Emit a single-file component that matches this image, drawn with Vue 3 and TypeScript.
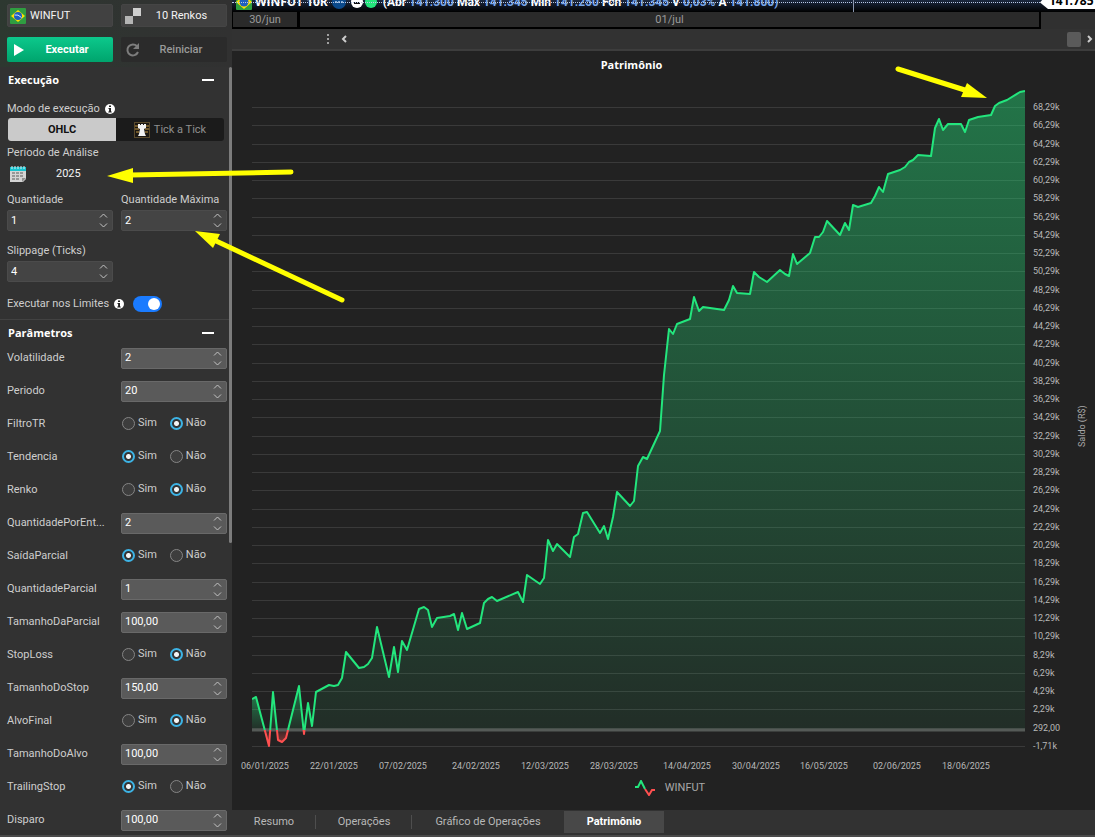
<script setup lang="ts">
import { reactive, ref } from 'vue'

type Point = [number, number]
interface Param {
  id: string
  label: string
  kind: 'number' | 'choice'
  value: string
}

const asset = ref('WINFUT')
const mode = ref('ohlc')
const quantity = ref('1')
const maxQuantity = ref('2')
const slippage = ref('4')
const runAtLimits = ref(true)

const params = reactive<Param[]>([
  { id: 'volatilidade', label: 'Volatilidade', kind: 'number', value: '2' },
  { id: 'periodo', label: 'Periodo', kind: 'number', value: '20' },
  { id: 'filtro', label: 'FiltroTR', kind: 'choice', value: 'nao' },
  { id: 'tendencia', label: 'Tendencia', kind: 'choice', value: 'sim' },
  { id: 'renko', label: 'Renko', kind: 'choice', value: 'nao' },
  { id: 'qtd-entrada', label: 'QuantidadePorEnt...', kind: 'number', value: '2' },
  { id: 'saida-parcial', label: 'SaídaParcial', kind: 'choice', value: 'sim' },
  { id: 'qtd-parcial', label: 'QuantidadeParcial', kind: 'number', value: '1' },
  { id: 'tam-parcial', label: 'TamanhoDaParcial', kind: 'number', value: '100,00' },
  { id: 'stop-loss', label: 'StopLoss', kind: 'choice', value: 'nao' },
  { id: 'tam-stop', label: 'TamanhoDoStop', kind: 'number', value: '150,00' },
  { id: 'alvo-final', label: 'AlvoFinal', kind: 'choice', value: 'nao' },
  { id: 'tam-alvo', label: 'TamanhoDoAlvo', kind: 'number', value: '100,00' },
  { id: 'trailing', label: 'TrailingStop', kind: 'choice', value: 'sim' },
  { id: 'disparo', label: 'Disparo', kind: 'number', value: '100,00' },
])

const quote: [string, string][] = [
  ['(Abr', '141.300'],
  ['Max', '141.345'],
  ['Min', '141.250'],
  ['Fch', '141.345'],
  ['V', '0,03%'],
  ['A', '141.800)'],
]

const tabs = ['Resumo', 'Operações', 'Gráfico de Operações', 'Patrimônio']
const activeTab = ref('Patrimônio')

const dates = [
  '06/01/2025', '22/01/2025', '07/02/2025', '24/02/2025', '12/03/2025', '28/03/2025',
  '14/04/2025', '30/04/2025', '16/05/2025', '02/06/2025', '18/06/2025',
]

const yLabels: string[] = []
for (let v = 68; v >= 2; v -= 2) yLabels.push(v + ',29k')
yLabels.push('292,00', '-1,71k')

const gridLines = yLabels.map((_, i) => Math.round(107 + (i * 639) / 35) + 0.5)

const baseline = 730
const equity: Point[] = [
  [252, 699], [256, 697], [269, 746], [273, 692], [278, 740], [282, 742], [286, 738], [299, 686],
  [304, 734], [308, 703], [312, 726], [316, 692], [329, 685], [334, 686], [338, 685], [342, 678],
  [346, 652], [359, 668], [364, 667], [368, 664], [372, 658], [377, 627], [389, 677], [394, 647],
  [398, 672], [402, 641], [407, 650], [419, 609], [424, 607], [428, 610], [432, 627], [437, 618],
  [450, 616], [454, 614], [458, 630], [462, 613], [467, 629], [480, 623], [484, 603], [488, 599],
  [492, 597], [497, 601], [518, 592], [523, 602], [527, 575], [540, 584], [544, 578], [548, 540],
  [553, 551], [557, 544], [570, 557], [574, 537], [578, 534], [583, 513], [587, 512], [600, 533],
  [604, 526], [608, 539], [613, 517], [617, 492], [630, 506], [634, 501], [638, 466], [643, 457],
  [647, 459], [660, 431], [664, 375], [669, 329], [673, 334], [677, 324], [690, 319], [694, 297],
  [699, 311], [703, 307], [724, 310], [729, 300], [733, 286], [737, 293], [750, 294], [754, 272],
  [759, 277], [767, 282], [780, 270], [785, 274], [789, 276], [793, 254], [797, 264], [810, 253],
  [815, 237], [819, 237], [823, 232], [827, 221], [840, 235], [845, 223], [849, 230], [853, 205],
  [858, 207], [871, 203], [875, 196], [879, 187], [883, 192], [888, 174], [900, 170], [905, 167],
  [909, 162], [913, 160], [918, 155], [931, 156], [935, 128], [939, 119], [943, 130], [948, 124],
  [961, 124], [965, 132], [969, 120], [978, 117], [991, 115], [995, 106], [999, 103], [1007, 100],
  [1020, 92], [1025, 91],
]

interface Run {
  gain: boolean
  line: string
  area: string
}

/* Cuts the curve where it crosses zero, so gains and losses are painted apart. */
function splitRuns(points: Point[]): Run[] {
  const runs: Run[] = []
  let current: Point[] = [points[0]]
  const close = () => {
    const line = current.map((p) => p.join(',')).join(' ')
    const first = current[0][0]
    const last = current[current.length - 1][0]
    runs.push({
      gain: current.some((p) => p[1] < baseline),
      line,
      area: `${first},${baseline} ${line} ${last},${baseline}`,
    })
  }
  for (let i = 1; i < points.length; i++) {
    const [x0, y0] = points[i - 1]
    const [x1, y1] = points[i]
    if (y0 < baseline !== y1 < baseline) {
      const cross: Point = [x0 + ((baseline - y0) * (x1 - x0)) / (y1 - y0), baseline]
      current.push(cross)
      close()
      current = [cross]
    }
    current.push([x1, y1])
  }
  close()
  return runs
}

const runs = splitRuns(equity)
</script>

<template>
  <div class="shell">
    <div class="work">
      <aside class="sidebar">
        <div class="toolbar">
          <button class="pick asset" type="button">
            <svg class="flag" viewBox="0 0 16 16" aria-hidden="true">
              <rect width="16" height="16" rx="1" fill="#2f9e41" />
              <path d="M8 2 15 8 8 14 1 8z" fill="#ffe000" />
              <circle cx="8" cy="8" r="4" fill="#1f5fc0" />
              <path d="M4.5 7Q8 6 11.500 9.500" fill="none" stroke="#cfe3ff" stroke-width="1" />
            </svg>
            <span>{{ asset }}</span>
          </button>
          <button class="pick" type="button">
            <svg class="renko" viewBox="0 0 16 16" aria-hidden="true">
              <rect x="8" width="8" height="8" fill="#cfcfcf" />
              <rect y="8" width="8" height="8" fill="#b4b4b4" />
            </svg>
            <span class="mid">10 Renkos</span>
          </button>
          <button class="run" type="button">
            <svg class="play" viewBox="0 0 12 14" aria-hidden="true"><path d="M1 1 11 7 1 13z" fill="#fff" /></svg>
            <span class="mid">Executar</span>
          </button>
          <button class="reset" type="button">
            <svg class="reload" viewBox="0 0 16 16" aria-hidden="true">
              <path d="M12 4.200A5.500 5.500 0 1 0 13 10" fill="none" stroke="#7d7d7d" stroke-width="2" />
              <path d="M14 1v6H8z" fill="#7d7d7d" />
            </svg>
            <span class="mid">Reiniciar</span>
          </button>
        </div>

        <div class="scroller">
          <section class="group">
            <h2 class="heading">
              Execução
              <button class="collapse" type="button" aria-label="Recolher Execução"></button>
            </h2>
            <div class="caption first">
              Modo de execução
              <svg class="info" viewBox="0 0 10 10" aria-hidden="true">
                <circle cx="5" cy="5" r="5" fill="#fff" />
                <path d="M4 1.500h2v1.500h-2zM3.500 4h2.500v3.500h.7v1H3.300v-1h.8v-2.500h-.6z" fill="#222" />
              </svg>
            </div>
            <div class="segments">
              <button type="button" :class="{ on: mode === 'ohlc' }" @click="mode = 'ohlc'">OHLC</button>
              <button type="button" :class="{ on: mode === 'tick' }" @click="mode = 'tick'">
                <svg class="rook" viewBox="0 0 16 16" aria-hidden="true">
                  <rect x=".5" y=".5" width="15" height="15" fill="#1b1712" stroke="#5a4a2c" />
                  <path d="M1 4h5M1 7h4M2 10h3M10 4h5M11 7h4M11 10h3" stroke="#c79a45" stroke-width="1" />
                  <path d="M4 2h2v1h1v-1h2v1h1v-1h2v4l-2 1 1 5 1 2H4l1-2 1-5-2-1z" fill="#f2f2f2" />
                </svg>
                Tick a Tick
              </button>
            </div>
            <div class="caption period">Período de Análise</div>
            <button class="calendar-row" type="button">
              <svg class="calendar" viewBox="0 0 16 16" aria-hidden="true">
                <path d="M0 4h16v9l-3 3H0z" fill="#d4d4d4" />
                <path d="M16 12h-4v4z" fill="#8f8f8f" />
                <rect y="1" width="16" height="4" fill="#17c3cf" />
                <path d="M2 0v3M5 0v3M8 0v3M11 0v3M14 0v3" stroke="#d8f4f6" />
                <path d="M2 6h3v2H2zM6 6h3v2H6zM10 6h3v2h-3zM2 9h3v2H2zM6 9h3v2H6zM10 9h3v2h-3zM2 12h3v2H2zM6 12h3v2H6z" fill="#979797" />
              </svg>
              <span>2025</span>
            </button>

            <div class="pair">
              <div>
                <label class="caption" for="quantity">Quantidade</label>
                <div class="spin">
                  <input id="quantity" v-model="quantity" type="text" />
                  <span class="steps">
                    <button type="button" aria-label="Aumentar"><svg viewBox="0 0 9 5"><path d="M1 4.500 4.500 1 8 4.500" /></svg></button>
                    <button type="button" aria-label="Diminuir"><svg viewBox="0 0 9 5"><path d="M1 .5 4.500 4 8 .5" /></svg></button>
                  </span>
                </div>
              </div>
              <div>
                <label class="caption" for="max-quantity">Quantidade Máxima</label>
                <div class="spin">
                  <input id="max-quantity" v-model="maxQuantity" type="text" />
                  <span class="steps">
                    <button type="button" aria-label="Aumentar"><svg viewBox="0 0 9 5"><path d="M1 4.500 4.500 1 8 4.500" /></svg></button>
                    <button type="button" aria-label="Diminuir"><svg viewBox="0 0 9 5"><path d="M1 .5 4.500 4 8 .5" /></svg></button>
                  </span>
                </div>
              </div>
              <div>
                <label class="caption" for="slippage">Slippage (Ticks)</label>
                <div class="spin">
                  <input id="slippage" v-model="slippage" type="text" />
                  <span class="steps">
                    <button type="button" aria-label="Aumentar"><svg viewBox="0 0 9 5"><path d="M1 4.500 4.500 1 8 4.500" /></svg></button>
                    <button type="button" aria-label="Diminuir"><svg viewBox="0 0 9 5"><path d="M1 .5 4.500 4 8 .5" /></svg></button>
                  </span>
                </div>
              </div>
            </div>

            <label class="limits">
              Executar nos Limites
              <svg class="info" viewBox="0 0 10 10" aria-hidden="true">
                <circle cx="5" cy="5" r="5" fill="#fff" />
                <path d="M4 1.500h2v1.500h-2zM3.500 4h2.500v3.500h.7v1H3.300v-1h.8v-2.500h-.6z" fill="#222" />
              </svg>
              <input v-model="runAtLimits" class="switch" type="checkbox" role="switch" />
            </label>
          </section>

          <section class="group params">
            <h2 class="heading">
              Parâmetros
              <button class="collapse" type="button" aria-label="Recolher Parâmetros"></button>
            </h2>
            <div class="rows">
              <div v-for="p in params" :key="p.id" class="row">
                <label v-if="p.kind === 'number'" class="name" :for="p.id">{{ p.label }}</label>
                <span v-else :id="p.id" class="name">{{ p.label }}</span>
                <div v-if="p.kind === 'number'" class="spin light">
                  <input :id="p.id" v-model="p.value" type="text" />
                  <span class="steps">
                    <button type="button" aria-label="Aumentar"><svg viewBox="0 0 9 5"><path d="M1 4.500 4.500 1 8 4.500" /></svg></button>
                    <button type="button" aria-label="Diminuir"><svg viewBox="0 0 9 5"><path d="M1 .5 4.500 4 8 .5" /></svg></button>
                  </span>
                </div>
                <div v-else class="choice" role="radiogroup" :aria-labelledby="p.id">
                  <label><input v-model="p.value" type="radio" :name="p.id" value="sim" />Sim</label>
                  <label><input v-model="p.value" type="radio" :name="p.id" value="nao" />Não</label>
                </div>
              </div>
            </div>
          </section>
          <div class="scroll-track"><div class="scroll-thumb"></div></div>
        </div>
      </aside>

      <main class="main">
        <div class="ticker">
          <div class="quote">
            <svg class="ticker-flag" viewBox="0 0 16 16" aria-hidden="true">
              <rect width="16" height="16" rx="1" fill="#2f9e41" />
              <path d="M8 1 16 8 8 15 0 8z" fill="#ffe000" />
              <circle cx="8" cy="8" r="4.500" fill="#1f5fc0" />
            </svg>
            <b class="symbol">WINFUT 10R</b>
            <svg class="badges" viewBox="0 0 46 14" aria-hidden="true">
              <circle cx="7" cy="7" r="7" fill="#0b4a8c" />
              <path d="M3 7h8" stroke="#7fa9d4" stroke-width="2" stroke-dasharray="2 1" />
              <circle cx="25" cy="7" r="6" fill="#fff" />
              <path d="M22 8h6" stroke="#111" stroke-width="2" />
              <circle cx="39" cy="7" r="6" fill="#23e67d" />
            </svg>
            <span class="values">
              <template v-for="[k, v] in quote" :key="k"><b>{{ k }}</b>&nbsp;<i>{{ v }}</i>&nbsp;</template>
            </span>
          </div>
          <div class="level"></div>
          <div class="marker"></div>
          <div class="price">141.785</div>
        </div>
        <div class="day-axis">
          <span class="day">30/jun</span>
          <span class="day wide">01/jul</span>
        </div>
        <div class="h-scroll">
          <span class="grip"><i></i><i></i><i></i></span>
          <button type="button" class="arrow" aria-label="Anterior"><svg viewBox="0 0 6 8"><path d="M5 1 2 4 5 7" /></svg></button>
          <span class="thumb"></span>
          <button type="button" class="arrow next" aria-label="Próximo"><svg viewBox="0 0 6 8"><path d="M1 1 4 4 1 7" /></svg></button>
        </div>

        <section class="chart">
          <h1 class="chart-title">Patrimônio</h1>
          <div class="plot-area">
            <div class="plot">
              <svg class="plot-svg" viewBox="252 88 773 664" preserveAspectRatio="none" role="img" aria-label="Patrimônio">
                <defs>
                  <linearGradient id="gain" x1="0" y1="0" x2="0" y2="1">
                    <stop offset="0" stop-color="#23e67d" stop-opacity=".42" />
                    <stop offset="1" stop-color="#23e67d" stop-opacity=".06" />
                  </linearGradient>
                  <linearGradient id="loss" x1="0" y1="1" x2="0" y2="0">
                    <stop offset="0" stop-color="#ff5050" stop-opacity=".42" />
                    <stop offset="1" stop-color="#ff5050" stop-opacity=".1" />
                  </linearGradient>
                </defs>
                <line v-for="y in gridLines" :key="y" class="grid-line" x1="252" x2="1025" :y1="y" :y2="y" />
                <polygon
                  v-for="(r, i) in runs"
                  :key="'a' + i"
                  :points="r.area"
                  :fill="r.gain ? 'url(#gain)' : 'url(#loss)'"
                />
                <line class="zero" x1="252" x2="1025" :y1="baseline" :y2="baseline" />
                <polyline
                  v-for="(r, i) in runs"
                  :key="'l' + i"
                  :class="['curve', r.gain ? 'gain' : 'loss']"
                  :points="r.line"
                />
              </svg>
            </div>
            <div class="y-axis"><span v-for="y in yLabels" :key="y">{{ y }}</span></div>
            <div class="y-title">Saldo (R$)</div>
          </div>
          <div class="x-axis"><span v-for="d in dates" :key="d">{{ d }}</span></div>
          <div class="legend">
            <svg class="legend-mark" viewBox="0 0 20 16" aria-hidden="true">
              <path d="M0 7h3L6 1 10 9" fill="none" stroke="#23e67d" stroke-width="2" />
              <path d="M10 9 14 15 17 10h3" fill="none" stroke="#ff5050" stroke-width="2" />
            </svg>
            WINFUT
          </div>
        </section>

        <nav class="tabs">
          <button
            v-for="t in tabs"
            :key="t"
            type="button"
            :class="{ active: t === activeTab }"
            @click="activeTab = t"
          >{{ t }}</button>
        </nav>
      </main>
    </div>
    <div class="bottom-edge"></div>

    <svg class="notes" width="1095" height="837" aria-hidden="true">
      <g stroke="#ffff00" stroke-width="5" stroke-linecap="round">
        <path d="M291 172 130 175M342 300 214 240M898 69 968 91" />
      </g>
      <g fill="#ffff00">
        <path d="M107 176 133 168 133 183z" />
        <path d="M195 231 220 234 213 248z" />
        <path d="M987 98 967 83 961 97z" />
      </g>
    </svg>
  </div>
</template>

<style>
body {
  margin: 0;
  background: #222;
}
</style>

<style scoped>
.shell {
  position: relative;
  display: flex;
  flex-direction: column;
  min-height: 100vh;
  overflow: hidden;
  background: #222;
  color: #cecece;
  font: 11px/16px Roboto, "Noto Sans", sans-serif;
}
.shell * {
  box-sizing: border-box;
}
button,
input {
  margin: 0;
  padding: 0;
  border: 0;
  background: none;
  color: inherit;
  font: inherit;
}
svg {
  display: block;
  flex: none;
}
.work {
  flex: 1;
  display: grid;
  grid-template-columns: 232px minmax(0, 1fr);
}

.sidebar {
  display: flex;
  flex-direction: column;
  background: #323232;
}
.toolbar {
  display: grid;
  grid-template-columns: 106px 106px;
  grid-template-rows: 23px 25px;
  column-gap: 8px;
  row-gap: 10px;
  height: 67px;
  padding: 4px 7px 0;
  background: linear-gradient(90deg, #2d3830, #303331 60%, #313131);
}
.toolbar button {
  display: flex;
  align-items: center;
  border-radius: 2px;
}
.mid {
  flex: 1;
  text-align: center;
}
.pick {
  padding: 0 4px 0 3px;
  border: 1px solid #454545;
  background: #414141;
  color: #f4f4f4;
}
.pick.asset {
  gap: 4px;
  padding-left: 2px;
}
.flag,
.renko,
.reload,
.rook {
  width: 16px;
  height: 16px;
}
.run {
  padding: 0 4px 0 6px;
  background: linear-gradient(#0cc98c, #00a46d);
  color: #fff;
  font-weight: 700;
}
.play {
  width: 12px;
  height: 14px;
}
.reset {
  padding: 0 6px 0 4px;
  background: #2b2b2b;
  color: #9a9a9a;
  font-weight: 500;
}

.scroller {
  position: relative;
  flex: 1;
}
.scroll-track {
  position: absolute;
  top: 0;
  right: 0;
  bottom: 0;
  width: 3px;
}
.scroll-thumb {
  height: 62%;
  border-radius: 2px;
  background: #7c7c7c;
}
.group {
  padding: 0 5px 0 7px;
}
.heading {
  display: flex;
  align-items: center;
  justify-content: space-between;
  height: 26px;
  margin: 0;
  padding: 0 13px 0 1px;
  color: #fff;
  font-family: "Open Sans", sans-serif;
  font-size: 11px;
  font-weight: 700;
}
.collapse {
  width: 12px;
  height: 2px;
  background: #fff;
}
.caption {
  display: flex;
  align-items: center;
  gap: 5px;
  height: 16px;
  white-space: nowrap;
}
.caption.first {
  margin: 8px 0 1px;
}
.caption.period {
  margin: 4px 0 3px;
}
.info {
  width: 10px;
  height: 10px;
}
.segments {
  display: grid;
  grid-template-columns: 1fr 1fr;
  height: 23px;
  margin: 0 3px 0 1px;
  border-radius: 3px;
  background: #1b1b1b;
  overflow: hidden;
}
.segments button {
  display: flex;
  align-items: center;
  justify-content: center;
  gap: 4px;
  color: #8f8f8f;
}
.segments .on {
  background: #cacaca;
  color: #111;
  font-weight: 700;
}
.calendar-row {
  display: flex;
  align-items: center;
  gap: 30px;
  height: 20px;
  padding-left: 3px;
  color: #f4f4f4;
}
.calendar {
  width: 16px;
  height: 16px;
}
.pair {
  display: grid;
  grid-template-columns: 106px 106px;
  column-gap: 8px;
  row-gap: 12px;
  margin-top: 8px;
}
.pair .spin {
  margin-top: 2px;
}
.spin {
  display: flex;
  height: 21px;
  border: 1px solid #4b4b4b;
  border-radius: 2px;
  background: #444;
  color: #fff;
}
.spin input {
  flex: 1;
  min-width: 0;
  padding-left: 3px;
  outline: none;
}
.spin.light {
  border-color: #696969;
  background: #5a5a5a;
}
.steps {
  display: flex;
  flex-direction: column;
  justify-content: space-between;
  width: 16px;
  padding: 2px 3px 2px 3px;
}
.steps button {
  height: 5px;
}
.steps svg {
  width: 9px;
  height: 5px;
  fill: none;
  stroke: #c4c4c4;
}
.limits {
  display: flex;
  align-items: center;
  gap: 5px;
  height: 16px;
  margin-top: 14px;
}
.switch {
  appearance: none;
  width: 29px;
  height: 16px;
  margin-left: 4px;
  padding: 2px;
  border-radius: 8px;
  background: #555;
}
.switch::before {
  content: "";
  display: block;
  width: 12px;
  height: 12px;
  border-radius: 50%;
  background: #fff;
}
.switch:checked {
  padding-left: 15px;
  background: #1a7bff;
}
.params {
  margin-top: 7px;
  border-top: 1px solid #424242;
}
.rows {
  display: flex;
  flex-direction: column;
  gap: 11px;
  padding: 1px 0 4px;
}
.row {
  display: grid;
  grid-template-columns: 106px 106px;
  column-gap: 8px;
  align-items: center;
  height: 22px;
}
.name {
  white-space: nowrap;
}
.choice {
  display: flex;
  gap: 13px;
  padding: 0 0 2px 1px;
}
.choice label {
  display: flex;
  align-items: center;
  gap: 3px;
  min-width: 34px;
}
.choice input {
  appearance: none;
  width: 13px;
  height: 13px;
  border: 1px solid #858585;
  border-radius: 50%;
  background: #3d3d3d;
}
.choice input:checked {
  border: 2px solid #3db4e6;
  background: radial-gradient(circle, #f4f4f4 2px, #333 3px);
}

.main {
  display: flex;
  flex-direction: column;
  min-width: 0;
}
.ticker {
  position: relative;
  height: 12px;
  overflow: hidden;
  background: linear-gradient(#1c2940, #000);
}
.quote {
  display: flex;
  align-items: center;
  height: 16px;
  margin-top: -6px;
  padding-left: 4px;
  color: #fff;
  font-family: "Open Sans", sans-serif;
  font-size: 12px;
  white-space: nowrap;
}
.ticker-flag {
  width: 16px;
  height: 16px;
}
.symbol {
  margin: 0 4px 0 3px;
}
.badges {
  width: 46px;
  height: 14px;
  margin-right: 5px;
}
.values {
  font-family: Roboto, sans-serif;
  font-size: 12px;
}
.values b {
  font-weight: 700;
}
.values i {
  color: #78a6ea;
  font-style: normal;
  font-weight: 700;
}
.level {
  position: absolute;
  top: 2px;
  right: 55px;
  left: 0;
  border-top: 1px dotted #b8c8e8;
}
.marker {
  position: absolute;
  top: 0;
  left: 72%;
  width: 1px;
  height: 12px;
  background: #8a96ae;
}
.price {
  position: absolute;
  top: -7px;
  right: 0;
  width: 55px;
  height: 16px;
  padding-left: 9px;
  background: #fff;
  clip-path: polygon(8px 100%, 0 60%, 8px 0, 100% 0, 100% 100%);
  color: #000;
  font-family: "Open Sans", sans-serif;
  font-size: 12px;
  font-weight: 700;
}
.day-axis {
  display: flex;
  gap: 3px;
  height: 17px;
  margin-right: 54px;
  padding: 0 2px 2px 1px;
  background: #000;
  box-shadow: 54px 0 #303030;
  color: #9a9a9a;
}
.day {
  width: 64px;
  background: #2a2a2a;
  line-height: 15px;
  text-align: center;
}
.day.wide {
  flex: 1;
  width: auto;
}
.h-scroll {
  display: flex;
  align-items: center;
  height: 22px;
  padding: 0 2px 0 95px;
  border-bottom: 2px solid #3d3d3d;
  background: #323232;
}
.grip {
  display: flex;
  flex-direction: column;
  gap: 2px;
  width: 14px;
}
.grip i {
  width: 2px;
  height: 2px;
  background: #a0a0a0;
}
.arrow svg {
  width: 6px;
  height: 8px;
  fill: none;
  stroke: #ccc;
  stroke-width: 2;
}
.thumb {
  width: 14px;
  height: 15px;
  margin: 0 6px 0 auto;
  border-radius: 2px;
  background: #5a5a5a;
}

.chart {
  flex: 1;
  display: flex;
  flex-direction: column;
  background: #222;
}
.chart-title {
  height: 37px;
  margin: 0;
  padding: 6px 64px 0 0;
  color: #fff;
  font-family: "Open Sans", sans-serif;
  font-size: 11px;
  font-weight: 700;
  line-height: 16px;
  text-align: center;
}
.plot-area {
  flex: 1;
  display: grid;
  grid-template-columns: minmax(0, 1fr) 49px 21px;
  padding-left: 20px;
}
.plot-svg {
  width: 100%;
  height: 0;
  min-height: 100%;
}
.grid-line {
  stroke: #3a3a3a;
}
.zero {
  stroke: #555a57;
  stroke-width: 3;
}
.curve {
  fill: none;
  stroke-width: 2;
  stroke-linejoin: round;
}
.curve.gain {
  stroke: #23e67d;
}
.curve.loss {
  stroke: #ff5050;
}
.y-axis {
  display: flex;
  flex-direction: column;
  justify-content: space-between;
  padding: 13px 0 0 8px;
  color: #b8b8b8;
  font-size: 9px;
  line-height: 12px;
}
.y-title {
  justify-self: start;
  writing-mode: vertical-rl;
  transform: rotate(180deg);
  padding-bottom: 12px;
  color: #a8a8a8;
  font-size: 9px;
  line-height: 16px;
  text-align: center;
}
.x-axis {
  display: grid;
  grid-template-columns: 69fr 69fr 73fr 69fr 69fr 73fr 69fr 68fr 73fr 69fr 83fr;
  padding: 8px 70px 0 9px;
  color: #b8b8b8;
  font-size: 9px;
  line-height: 12px;
}
.legend {
  display: flex;
  align-items: center;
  justify-content: center;
  gap: 10px;
  height: 16px;
  margin: 8px 0 14px;
  padding-left: 13px;
  color: #a8a8a8;
}
.legend-mark {
  width: 20px;
  height: 16px;
}
.tabs {
  display: flex;
  height: 25px;
  padding: 1px 0 2px;
  background: #323232;
  color: #b8b8b8;
}
.tabs button {
  width: 96px;
  background: linear-gradient(#4e4e4e, #4e4e4e) right center / 1px 14px no-repeat;
}
.tabs button:first-child {
  width: 84px;
}
.tabs button:nth-child(3) {
  width: 152px;
  background: none;
}
.tabs button.active {
  width: 100px;
  background: #484848;
  color: #fff;
  font-weight: 700;
}
.bottom-edge {
  height: 2px;
  background: #4a4a4a;
}
.notes {
  position: absolute;
  top: 0;
  left: 0;
  pointer-events: none;
}
</style>
